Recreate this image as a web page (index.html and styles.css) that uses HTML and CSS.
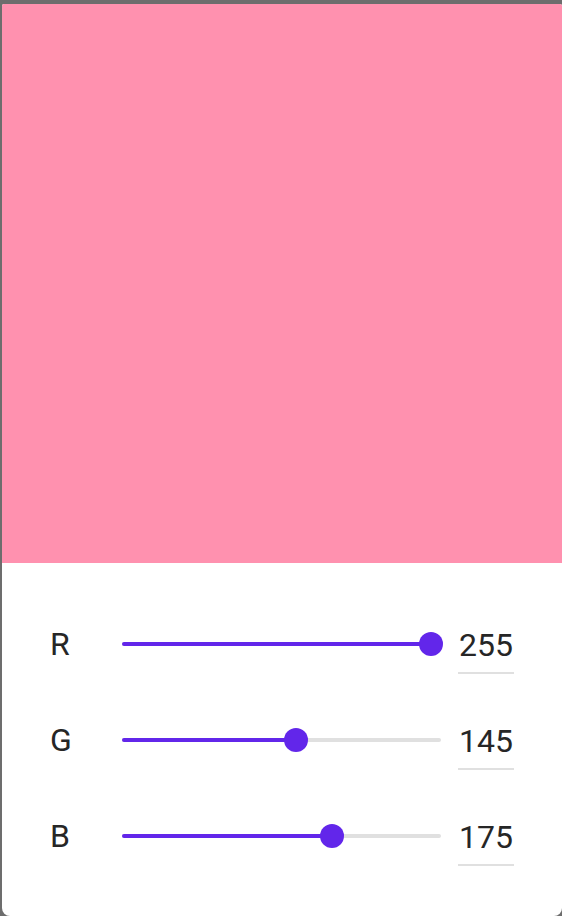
FILE: index.html
```html
<!DOCTYPE html>
<html>
<head>
<meta charset="utf-8">
<link rel="stylesheet" href="styles.css">
</head>
<body>
<div class="dialog">
  <div class="preview"></div>
  <div class="controls">
    <div class="row">
      <div class="label">R</div>
      <div class="slider">
        <div class="track"></div>
        <div class="fill" style="width: 96.9%"></div>
        <div class="thumb" style="left: 96.9%"></div>
      </div>
      <div class="value">255</div>
    </div>
    <div class="row">
      <div class="label">G</div>
      <div class="slider">
        <div class="track"></div>
        <div class="fill" style="width: 54.5%"></div>
        <div class="thumb" style="left: 54.5%"></div>
      </div>
      <div class="value">145</div>
    </div>
    <div class="row">
      <div class="label">B</div>
      <div class="slider">
        <div class="track"></div>
        <div class="fill" style="width: 65.8%"></div>
        <div class="thumb" style="left: 65.8%"></div>
      </div>
      <div class="value">175</div>
    </div>
  </div>
</div>
</body>
</html>
```
FILE: styles.css
```css
html, body {
  margin: 0;
  padding: 0;
  height: 100%;
}
body {
  background: #6d6d6d;
  font-family: Roboto, "Liberation Sans", sans-serif;
  overflow: hidden;
  padding: 4px 0 0 2px;
  box-sizing: border-box;
}
.dialog {
  width: 560px;
  height: 912px;
  background: #ffffff;
  border-radius: 2px 2px 8px 8px;
  overflow: hidden;
  display: flex;
  flex-direction: column;
}
.preview {
  height: 559px;
  flex: none;
  background: rgb(255, 145, 175);
}
.controls {
  padding: 33px 48px 32px 46px;
  display: flex;
  flex-direction: column;
}
.row {
  height: 96px;
  display: flex;
  align-items: center;
}
.label {
  width: 74px;
  flex: none;
  font-size: 32px;
  line-height: 40px;
  color: #262626;
  padding-left: 2px;
  box-sizing: border-box;
}
.slider {
  width: 319px;
  flex: none;
  height: 24px;
  position: relative;
}
.track {
  position: absolute;
  left: 0;
  right: 0;
  top: 10px;
  height: 4px;
  border-radius: 2px;
  background: #e0e0e0;
}
.fill {
  position: absolute;
  left: 0;
  top: 10px;
  height: 4px;
  border-radius: 2px;
  background: #6226ea;
}
.thumb {
  position: absolute;
  top: 0;
  width: 24px;
  height: 24px;
  margin-left: -12px;
  border-radius: 50%;
  background: #6226ea;
}
.value {
  margin-left: 17px;
  width: 56px;
  flex: none;
  box-sizing: border-box;
  padding: 10px 0 7px 1px;
  font-size: 32px;
  line-height: 40px;
  color: #262626;
  border-bottom: 2px solid #e0e0e0;
}
```
